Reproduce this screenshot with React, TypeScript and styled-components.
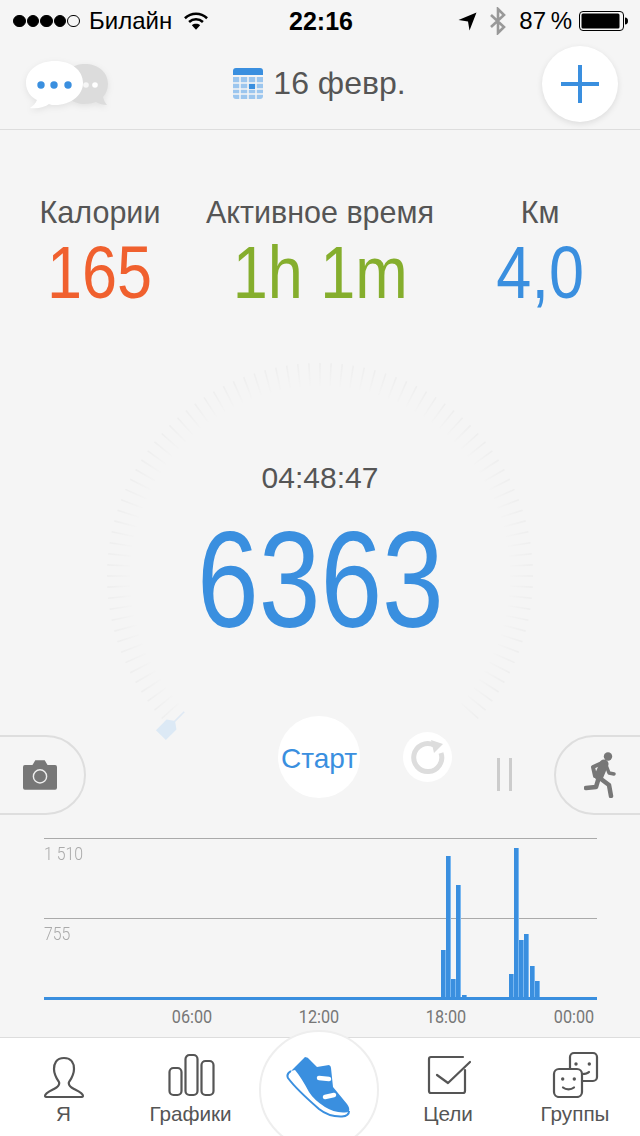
import React, { FC } from 'react'
import styled, { createGlobalStyle } from 'styled-components'

const GlobalStyle = createGlobalStyle`
  html, body {
    margin: 0;
    padding: 0;
    background: #f5f5f5;
  }
  body {
    font-family: "Liberation Sans", Arial, sans-serif;
  }
`

const Screen = styled.div`
  width: 640px;
  height: 1136px;
  display: flex;
  flex-direction: column;
  overflow: hidden;
  background: #f5f5f5;
  color: #555;
`

const StatusBar = styled.div`
  height: 40px;
  box-sizing: border-box;
  padding: 2px 11px 0 13px;
  display: grid;
  grid-template-columns: 1fr auto 1fr;
  align-items: center;
  color: #000;
  font-size: 24px;
`

const StatusGroup = styled.div<{ $end?: boolean }>`
  display: flex;
  align-items: center;
  justify-content: ${p => (p.$end ? 'flex-end' : 'flex-start')};
`

const Dots = styled.div`
  display: flex;
  gap: 1px;
  margin-right: 9px;
`

const Dot = styled.span<{ $empty?: boolean }>`
  width: 12.6px;
  height: 12.6px;
  border-radius: 50%;
  box-sizing: border-box;
  border: 1px solid #000;
  background: ${p => (p.$empty ? 'transparent' : '#000')};
`

const Clock = styled.div`
  font-weight: 700;
  font-size: 25px;
`

const Percent = styled.span`
  word-spacing: -2px;
`

const Header = styled.header`
  height: 89px;
  display: grid;
  grid-template-columns: 1fr auto 1fr;
  align-items: center;
  padding: 0 22px 0 26px;
  border-bottom: 1px solid #ddd;
`

const ChatIcon = styled.svg`
  width: 84px;
  height: 52px;
  filter: drop-shadow(0 2px 3px rgba(0, 0, 0, 0.08));
`

const DateLabel = styled.div`
  display: flex;
  align-items: center;
  gap: 10px;
  font-size: 32px;
  color: #555;
  margin: -2px 0 0 -5px;
`

const AddButton = styled.div`
  justify-self: end;
  width: 76px;
  height: 76px;
  margin-top: -1px;
  border-radius: 50%;
  background: #fff;
  box-shadow: 0 2px 6px rgba(0, 0, 0, 0.1);
  display: flex;
  align-items: center;
  justify-content: center;
`

const Stats = styled.section`
  display: flex;
  padding-top: 64px;
  height: 173px;
  box-sizing: border-box;
`

const Stat = styled.div<{ $width: number }>`
  width: ${p => p.$width}px;
  display: flex;
  flex-direction: column;
  align-items: center;
`

const StatLabel = styled.div`
  font-size: 30.5px;
  line-height: 36px;
  color: #555;
`

const StatValue = styled.div<{ $color: string }>`
  font-size: 75px;
  line-height: 86px;
  margin-top: -1px;
  transform: scaleX(0.84);
  color: ${p => p.$color};
`

const DialArea = styled.section`
  position: relative;
  height: 535px;
  flex: none;
`

const DialArt = styled.svg`
  position: absolute;
  left: 80px;
  top: 33px;
  width: 480px;
  height: 480px;
`

const DialText = styled.div`
  position: relative;
  display: flex;
  flex-direction: column;
  align-items: center;
  padding-top: 156px;
`

const Elapsed = styled.div`
  font-size: 30px;
  line-height: 38px;
  color: #555;
`

const Steps = styled.div`
  font-size: 137px;
  line-height: 160px;
  margin-top: 3px;
  transform: scaleX(0.81);
  color: #3a8fdf;
`

const Controls = styled.div`
  position: absolute;
  left: 0;
  right: 0;
  top: 411px;
  height: 110px;
`

const SideTab = styled.div<{ $side: 'left' | 'right' }>`
  position: absolute;
  top: 21px;
  ${p => p.$side}: -2px;
  width: 88px;
  height: 80px;
  box-sizing: border-box;
  padding-${p => (p.$side === 'left' ? 'right' : 'left')}: 4px;
  border: 2px solid #dedede;
  border-radius: ${p => (p.$side === 'left' ? '0 40px 40px 0' : '40px 0 0 40px')};
  display: flex;
  align-items: center;
  justify-content: center;
`

const StartButton = styled.div`
  position: absolute;
  left: 278px;
  top: 2px;
  width: 82px;
  height: 82px;
  box-sizing: border-box;
  padding-top: 3px;
  border-radius: 50%;
  background: #fff;
  color: #3a8fdf;
  font-size: 28px;
  display: flex;
  align-items: center;
  justify-content: center;
`

const ResetButton = styled.div`
  position: absolute;
  left: 403px;
  top: 18px;
  width: 49px;
  height: 50px;
  border-radius: 50%;
  background: #fff;
  display: flex;
  align-items: center;
  justify-content: center;
`

const PauseBars = styled.div`
  position: absolute;
  left: 497px;
  top: 44px;
  width: 15px;
  height: 33px;
  box-sizing: border-box;
  border-left: 3px solid #ccc;
  border-right: 3px solid #ccc;
`

const Chart = styled.section`
  position: relative;
  height: 199px;
  margin-left: 44px;
  width: 553px;
  flex: none;
`

const GridLine = styled.div`
  height: 1px;
  background: #aaa;
`

const GridRow = styled.div`
  height: 80px;
`

const AxisValue = styled.div`
  font-family: Roboto, "Liberation Sans", sans-serif;
  font-weight: 300;
  font-size: 18px;
  line-height: 20px;
  color: #aaa;
  margin-top: 5px;
  transform: scaleX(0.88);
  transform-origin: left center;
`

const Plot = styled.div`
  position: absolute;
  left: 0;
  right: 0;
  top: 0;
  height: 159px;
  border-bottom: 3px solid #3a8fdf;
`

const Bar = styled.div<{ $h: number }>`
  position: absolute;
  bottom: 0;
  width: 5px;
  box-sizing: border-box;
  height: ${p => p.$h}px;
  background: #3a8fdf;
  border-right: 1px solid #79b7f0;
`

const Hours = styled.div`
  position: absolute;
  left: 0;
  right: 0;
  top: 169px;
  height: 20px;
`

const Hour = styled.span`
  position: absolute;
  top: 0;
  transform: translateX(-50%) scaleX(0.9);
  font-family: Roboto, "Liberation Sans", sans-serif;
  font-size: 18px;
  line-height: 20px;
  color: #777;
`

const TabBar = styled.nav`
  position: relative;
  flex: 1;
  background: #fff;
  border-top: 1px solid #ddd;
  display: grid;
  grid-template-columns: 127px 127px 132px 124px 130px;
`

const TabItem = styled.div`
  display: flex;
  flex-direction: column;
  align-items: center;
  justify-content: flex-end;
  padding-bottom: 10px;
  font-size: 20.7px;
  line-height: 24px;
  color: #555;
`

const TabIcon = styled.svg`
  width: 56px;
  height: 50px;
  margin-bottom: 4px;
`

const ShoeTab = styled.div`
  position: absolute;
  left: 259px;
  top: -8px;
  width: 120px;
  height: 120px;
  box-sizing: border-box;
  padding: 0 2px 5px 0;
  border-radius: 50%;
  background: #fff;
  border: 2px solid #eee;
  display: flex;
  align-items: center;
  justify-content: center;
`

const ticks = Array.from({ length: 120 }, (_, i) => i * 3).filter(a => a < 135 || a > 225)

const bars = [
  { x: 397, h: 47 },
  { x: 402, h: 141 },
  { x: 407, h: 18 },
  { x: 412, h: 112 },
  { x: 418, h: 2 },
  { x: 465, h: 23 },
  { x: 470, h: 149 },
  { x: 475, h: 57 },
  { x: 480, h: 63 },
  { x: 486, h: 31 },
  { x: 491, h: 16 },
]

const hours = [
  { label: '06:00', x: 148 },
  { label: '12:00', x: 275 },
  { label: '18:00', x: 402 },
  { label: '00:00', x: 530 },
]

const tabIcon = { fill: 'none', stroke: '#555', strokeWidth: 2.2, strokeLinejoin: 'round' as const, strokeLinecap: 'round' as const }

const App: FC = () => {
  return (
    <Screen>
      <GlobalStyle />
      <StatusBar>
        <StatusGroup>
          <Dots>
            <Dot />
            <Dot />
            <Dot />
            <Dot />
            <Dot $empty />
          </Dots>
          Билайн
          <svg width="24" height="19" viewBox="0 0 26 20" style={{ marginLeft: 12 }}>
            <path d="M1 6.5C8 0 18 0 25 6.5" fill="none" stroke="#000" strokeWidth="2.8" />
            <path d="M5.5 10.5C10 6.5 16 6.5 20.5 10.5" fill="none" stroke="#000" strokeWidth="2.8" />
            <path d="M13 19L8.5 14C11 12 15 12 17.5 14Z" fill="#000" />
          </svg>
        </StatusGroup>
        <Clock>22:16</Clock>
        <StatusGroup $end>
          <svg width="20" height="20" viewBox="0 0 20 20" style={{ marginRight: 11 }}>
            <path d="M0.5 9L18.5 1.5L11.5 19.5L10 10.5Z" fill="#000" />
          </svg>
          <svg width="18" height="28" viewBox="0 0 18 28" style={{ marginRight: 12 }}>
            <path d="M2 8L15 20L9 26V2L15 8L2 20" fill="none" stroke="#999" strokeWidth="2.6" />
          </svg>
          <Percent>87 %</Percent>
          <svg width="50" height="22" viewBox="0 0 50 22" style={{ marginLeft: 7 }}>
            <rect x="0.5" y="1.5" width="44" height="19" rx="3.5" fill="none" stroke="#000" />
            <rect x="2.5" y="3.5" width="38" height="15" rx="1.5" fill="#000" />
            <path d="M46 7.5C48 7.5 49 9 49 11C49 13 48 14.5 46 14.5Z" fill="#000" />
          </svg>
        </StatusGroup>
      </StatusBar>

      <Header>
        <ChatIcon viewBox="0 0 84 52">
          <path d="M59 5C46 5 36 13 36 25C36 37 46 45 59 45C63 45 67 44 70 43C73 45 77 46 81 46C79 44 78 41 77 38C80 35 82 30 82 25C82 13 72 5 59 5Z" fill="#dcdcdc" />
          <circle cx="60" cy="26" r="2.8" fill="#fff" opacity="0.75" />
          <circle cx="69" cy="26" r="2.8" fill="#fff" />
          <path d="M29 2C13 2 0 11 0 24C0 32 5 38 11 41C10 44 7 47 4 49C12 50 19 48 23 45C25 46 27 46 29 46C45 46 57 36 57 24C57 11 45 2 29 2Z" fill="#fff" />
          <circle cx="15" cy="26" r="3.7" fill="#3a8fdf" />
          <circle cx="28" cy="26" r="3.7" fill="#3a8fdf" />
          <circle cx="42" cy="26" r="3.7" fill="#3a8fdf" />
        </ChatIcon>
        <DateLabel>
          <svg width="30" height="31" viewBox="0 0 30 31">
            <path d="M3 0H27A3 3 0 0 1 30 3V7H0V3A3 3 0 0 1 3 0Z" fill="#3a8fdf" />
            <path d="M0 9H30V28A3 3 0 0 1 27 31H3A3 3 0 0 1 0 28Z" fill="#9cc6ee" />
            <path d="M7 9V31M15 9V31M23 9V31M0 15H30M0 21H30M0 26H30" stroke="#f5f5f5" strokeWidth="1.5" />
            <rect x="16" y="16" width="6" height="5" fill="#3a8fdf" />
          </svg>
          16 февр.
        </DateLabel>
        <AddButton>
          <svg width="38" height="38" viewBox="0 0 38 38">
            <path d="M19 0V38M0 19H38" stroke="#3a8fdf" strokeWidth="4" />
          </svg>
        </AddButton>
      </Header>

      <Stats>
        <Stat $width={200}>
          <StatLabel>Калории</StatLabel>
          <StatValue $color="#f0602e">165</StatValue>
        </Stat>
        <Stat $width={240}>
          <StatLabel>Активное время</StatLabel>
          <StatValue $color="#85ae2d">1h 1m</StatValue>
        </Stat>
        <Stat $width={200}>
          <StatLabel>Км</StatLabel>
          <StatValue $color="#3a8fdf">4,0</StatValue>
        </Stat>
      </Stats>

      <DialArea>
        <DialArt viewBox="-240 -240 480 480">
          <defs>
            <linearGradient id="tick" gradientUnits="userSpaceOnUse" x1="0" y1="-213" x2="0" y2="-190">
              <stop offset="0" stopColor="#eeeeee" />
              <stop offset="1" stopColor="#f4f4f4" />
            </linearGradient>
          </defs>
          {ticks.map(a => (
            <line key={a} x1="0" y1="-213" x2="0" y2="-190" stroke="url(#tick)" strokeWidth="1.6" transform={`rotate(${a})`} />
          ))}
          <g transform="rotate(225)">
            <line x1="0" y1="-192" x2="0" y2="-208" stroke="#dfe9f4" strokeWidth="1.6" />
            <path d="M0 -205L7 -210V-225H-7V-210Z" fill="#dce9f5" />
          </g>
        </DialArt>
        <DialText>
          <Elapsed>04:48:47</Elapsed>
          <Steps>6363</Steps>
        </DialText>
        <Controls>
          <SideTab $side="left">
            <svg width="34" height="30" viewBox="0 0 36 31">
              <path d="M2 5H10L13 0H23L26 5H34A2 2 0 0 1 36 7V29A2 2 0 0 1 34 31H2A2 2 0 0 1 0 29V7A2 2 0 0 1 2 5Z" fill="#777" />
              <circle cx="18" cy="17" r="7" fill="none" stroke="#eee" strokeWidth="1.5" />
            </svg>
          </SideTab>
          <StartButton>Старт</StartButton>
          <ResetButton>
            <svg width="36" height="36" viewBox="0 0 36 36">
              <path d="M24 6A14 14 0 1 0 31 14" fill="none" stroke="#ddd" strokeWidth="5" />
              <path d="M21 1L33 5L24 14Z" fill="#ddd" />
            </svg>
          </ResetButton>
          <PauseBars />
          <SideTab $side="right">
            <svg width="32" height="46" viewBox="0 0 32 46" fill="none" stroke="#777" strokeLinecap="round" strokeLinejoin="round">
              <circle cx="24" cy="4.5" r="4.2" fill="#777" stroke="none" />
              <path d="M20 12L15 24" strokeWidth="9" />
              <path d="M20 10L9 15L11 24" strokeWidth="4" />
              <path d="M22 13L25 21L30 22" strokeWidth="3.5" />
              <path d="M15 25L12 35L2 36" strokeWidth="4.5" />
              <path d="M17 27L25 33L27 44" strokeWidth="4.5" />
            </svg>
          </SideTab>
        </Controls>
      </DialArea>

      <Chart>
        <GridRow>
          <GridLine />
          <AxisValue>1 510</AxisValue>
        </GridRow>
        <GridRow>
          <GridLine />
          <AxisValue>755</AxisValue>
        </GridRow>
        <Plot>
          {bars.map(b => (
            <Bar key={b.x} $h={b.h} style={{ left: b.x }} />
          ))}
        </Plot>
        <Hours>
          {hours.map(h => (
            <Hour key={h.label} style={{ left: h.x }}>{h.label}</Hour>
          ))}
        </Hours>
      </Chart>

      <TabBar>
        <TabItem>
          <TabIcon viewBox="0 -6 56 50">
            <path {...tabIcon} d="M28 4C20 4 18 10 18 15C18 21 21 25 23 28C24 31 22 33 18 35C14 37 9 39 9 42C9 43 10 43 11 43H45C46 43 47 43 47 42C47 39 42 37 38 35C34 33 32 31 33 28C35 25 38 21 38 15C38 10 36 4 28 4Z" />
          </TabIcon>
          Я
        </TabItem>
        <TabItem>
          <TabIcon viewBox="0 -6 56 50">
            <rect {...tabIcon} x="6.5" y="14" width="12" height="27" rx="4" />
            <rect {...tabIcon} x="22.5" y="1" width="12" height="40" rx="4" />
            <rect {...tabIcon} x="38.5" y="7" width="12" height="34" rx="4" />
          </TabIcon>
          Графики
        </TabItem>
        <div />
        <TabItem>
          <TabIcon viewBox="0 -6 56 50">
            <path {...tabIcon} d="M43 3H11A2 2 0 0 0 9 5V37A2 2 0 0 0 11 39H43A2 2 0 0 0 45 37V16" />
            <path {...tabIcon} d="M17 21L28 29L50 8" />
          </TabIcon>
          Цели
        </TabItem>
        <TabItem>
          <TabIcon viewBox="0 -6 56 50">
            <path {...tabIcon} d="M23 15V3A4 4 0 0 1 27 -1H46A4 4 0 0 1 50 3V23A4 4 0 0 1 46 27H35" />
            <rect {...tabIcon} x="7" y="15" width="28" height="28" rx="5" />
            <circle cx="15.7" cy="25" r="1.7" fill="#555" />
            <circle cx="27.3" cy="25" r="1.7" fill="#555" />
            <circle cx="29" cy="10" r="1.7" fill="#555" />
            <circle cx="42.3" cy="10" r="1.7" fill="#555" />
            <path {...tabIcon} d="M16 33.5C19 36 24 36 27 33.5M35.5 20C38 20 40.5 19.5 42 18" />
          </TabIcon>
          Группы
        </TabItem>
        <ShoeTab>
          <svg width="64" height="61" viewBox="0 0 64 61">
            <path d="M5 14L19 0Q22 0 24 3L31 10L43 8Q45 9 45 11L47 30L61 47Q64 51 63 54Q61 56 57 55.5Q47 55 39 50Q28 43 23 35Q15 20 9 13Z" fill="#3a8fdf" />
            <path d="M5 14Q0 17 2 21Q10 32 33 52Q43 60 56 59.5Q63 59 63 54" fill="none" stroke="#3a8fdf" strokeWidth="2" />
            <path d="M33 21L43 22M39 40L48 38" stroke="#fff" strokeWidth="4.5" strokeLinecap="round" />
          </svg>
        </ShoeTab>
      </TabBar>
    </Screen>
  )
}

export default App
